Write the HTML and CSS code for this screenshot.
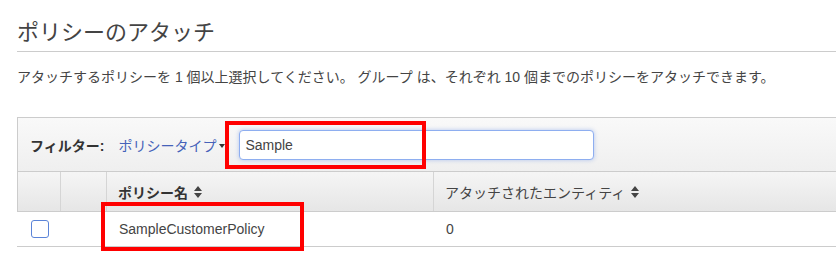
FILE: index.html
```html
<!DOCTYPE html>
<html lang="ja">
<head>
  <meta charset="UTF-8" />
  <title>ポリシーのアタッチ</title>
  <link rel="stylesheet" href="styles.css">
</head>
<body>
  <div class="page">
    <h1 class="title">ポリシーのアタッチ</h1>
    <p class="intro">アタッチするポリシーを 1 個以上選択してください。 グループ は、それぞれ 10 個までのポリシーをアタッチできます。</p>

    <div class="policy-table">
      <div class="filter-bar">
        <span class="filter-label">フィルター:</span>
        <span class="filter-type">ポリシータイプ
          <svg class="caret" width="6" height="4" viewBox="0 0 6 4"><path d="M0 0h6L3 4z" fill="#333"/></svg>
        </span>
        <input class="filter-input" type="text" value="Sample">
      </div>

      <div class="row head">
        <div class="cell"></div>
        <div class="cell"></div>
        <div class="cell sorted">ポリシー名 <svg class="sort" width="8" height="12" viewBox="0 0 8 12"><path d="M4 0l4 5H0zM4 12L0 7h8z" fill="#444"/></svg></div>
        <div class="cell">アタッチされたエンティティ <svg class="sort" width="8" height="12" viewBox="0 0 8 12"><path d="M4 0l4 5H0zM4 12L0 7h8z" fill="#444"/></svg></div>
      </div>

      <div class="row">
        <div class="cell check"><span class="checkbox"></span></div>
        <div class="cell"></div>
        <div class="cell">SampleCustomerPolicy</div>
        <div class="cell">0</div>
      </div>
    </div>
  </div>

  <!-- annotation marks drawn over the screenshot -->
  <div class="mark mark-filter"></div>
  <div class="mark mark-name"></div>
</body>
</html>
```

FILE: styles.css
```css
body {
  margin: 0;
  background: #fff;
  color: #444;
  font-family: "Liberation Sans", "Noto Sans CJK JP", sans-serif;
  font-size: 14px;
  position: relative;
  min-height: 259px;
}

.page {
  padding: 18px 0 12px 17px;
}

.title {
  margin: 0;
  font-size: 22px;
  font-weight: normal;
  line-height: 30px;
  color: #444;
  padding-bottom: 3px;
  border-bottom: 1px solid #ccc;
}

.intro {
  margin: 15px 0 0;
  line-height: 20px;
  color: #444;
}

.policy-table {
  margin-top: 30px;
}

.filter-bar {
  display: flex;
  align-items: center;
  height: 53px;
  padding-left: 12px;
  border-top: 1px solid #ccc;
  border-left: 1px solid #ccc;
  background: linear-gradient(#f9f9f9, #efefef);
}

.filter-label {
  font-weight: bold;
  color: #333;
}

.filter-type {
  margin-left: 14px;
  color: #4562b9;
  display: flex;
  align-items: center;
}

.caret {
  margin-left: 3px;
  margin-top: 2px;
}

.filter-input {
  margin-left: 14px;
  width: 355px;
  height: 30px;
  box-sizing: border-box;
  padding: 0 5px;
  border: 1px solid #8eaef0;
  border-radius: 4px;
  box-shadow: 0 0 4px rgba(100, 140, 230, 0.45);
  font-family: inherit;
  font-size: 14px;
  color: #444;
  outline: none;
}

.row {
  display: grid;
  grid-template-columns: 44px 46px 327px 1fr;
  height: 34px;
  align-items: center;
  border-bottom: 1px solid #ccc;
}

.row.head {
  grid-template-columns: 43px 46px 327px 1fr;
  height: 39px;
  border-top: 1px solid #ccc;
  border-left: 1px solid #ccc;
  background: linear-gradient(#f5f5f5, #e6e6e6);
  align-items: stretch;
}

.row.head .cell {
  display: flex;
  align-items: center;
  padding: 0 11px;
  color: #444;
}

.row.head .cell:nth-child(-n+3) {
  border-right: 1px solid #d5d5d5;
}

.row.head .sorted {
  font-weight: bold;
  color: #333;
}

.sort {
  margin-left: 6px;
}

.cell {
  box-sizing: border-box;
  padding: 0 12px;
  white-space: nowrap;
}

.cell.check {
  padding-left: 14px;
  display: flex;
}

.checkbox {
  width: 16px;
  height: 16px;
  border: 1px solid #5b84d8;
  border-radius: 3px;
  background: #fff;
}

.mark {
  position: absolute;
  border: 4px solid #f00;
  box-sizing: border-box;
}

.mark-filter {
  left: 225px;
  top: 121px;
  width: 201px;
  height: 48px;
}

.mark-name {
  left: 101px;
  top: 202px;
  width: 203px;
  height: 49px;
}
```
